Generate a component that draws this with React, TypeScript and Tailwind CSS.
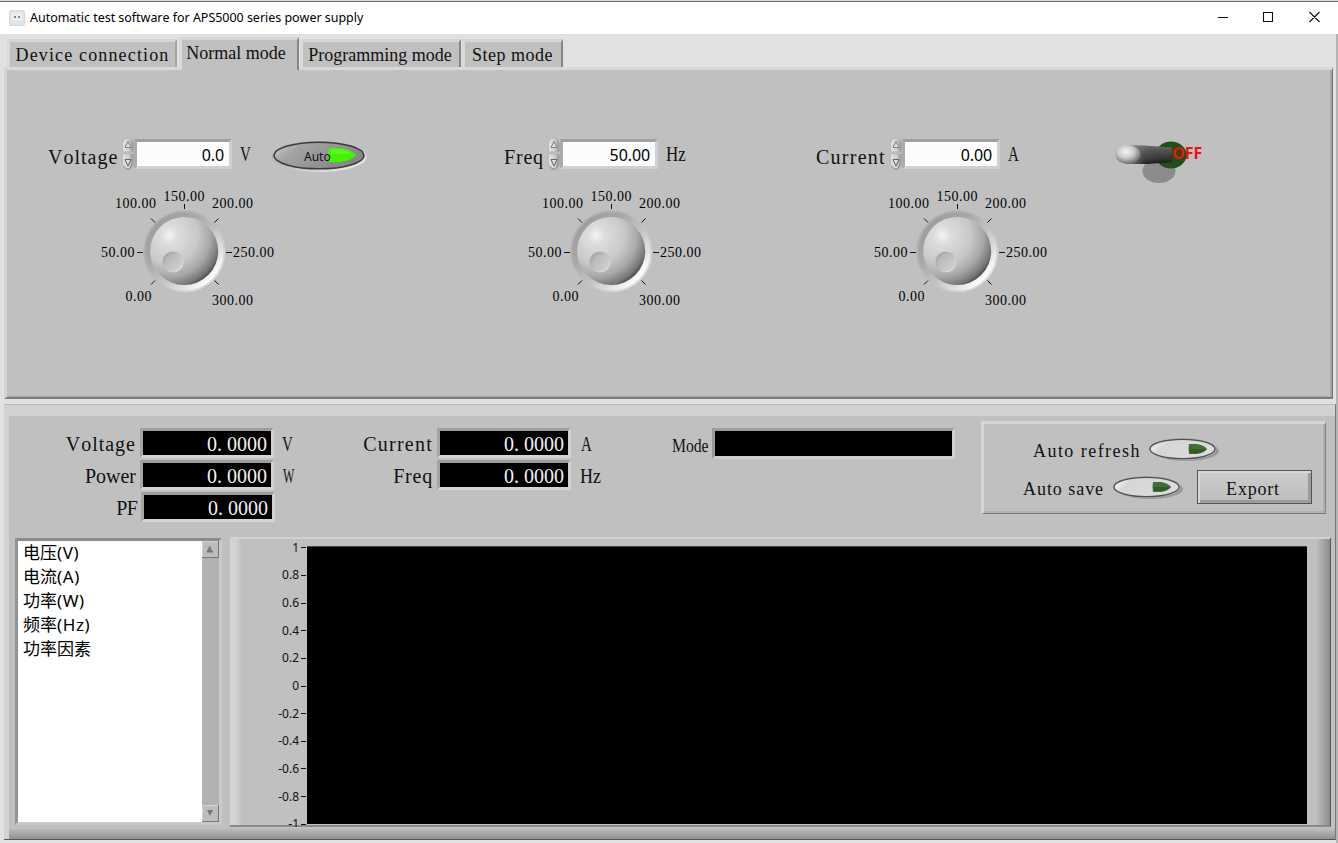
import React from "react";

const SERIF = "font-['Liberation_Serif','Noto_Sans_CJK_SC',serif] [font-kerning:none]";
const SANS = "font-['Noto_Sans','Noto_Sans_CJK_SC',sans-serif]";

function Defs() {
  return (
    <svg className="absolute h-0 w-0" aria-hidden="true">
      <defs>
        <linearGradient id="ring" x1="0.12" y1="0.12" x2="0.88" y2="0.88">
          <stop offset="0" stopColor="#9c9c9c" />
          <stop offset="0.3" stopColor="#a8a8a8" />
          <stop offset="0.55" stopColor="#c0c0c0" />
          <stop offset="0.78" stopColor="#e0e0e0" />
          <stop offset="0.95" stopColor="#ffffff" />
        </linearGradient>
        <radialGradient id="knob" cx="0.28" cy="0.27" r="0.84">
          <stop offset="0" stopColor="#f4f4f4" />
          <stop offset="0.16" stopColor="#dcdcdc" />
          <stop offset="0.5" stopColor="#c8c8c8" />
          <stop offset="0.72" stopColor="#a8a8a8" />
          <stop offset="0.9" stopColor="#767676" />
          <stop offset="1" stopColor="#383838" />
        </radialGradient>
        <linearGradient id="dimple" x1="0.1" y1="0.1" x2="0.9" y2="0.9">
          <stop offset="0" stopColor="#a2a2a2" />
          <stop offset="0.5" stopColor="#c2c2c2" />
          <stop offset="1" stopColor="#dedede" />
        </linearGradient>
        <linearGradient id="dimpleInner" x1="0.1" y1="0.1" x2="0.9" y2="0.9">
          <stop offset="0" stopColor="#b4b4b4" />
          <stop offset="1" stopColor="#d0d0d0" />
        </linearGradient>
        <linearGradient id="autoBtn" x1="0" y1="0" x2="1" y2="0.4">
          <stop offset="0" stopColor="#d0d0d0" />
          <stop offset="0.3" stopColor="#a4a4a4" />
          <stop offset="1" stopColor="#868686" />
        </linearGradient>
        <linearGradient id="autoRim" x1="0" y1="0" x2="1" y2="1">
          <stop offset="0" stopColor="#a0a0a0" />
          <stop offset="0.5" stopColor="#c0c0c0" />
          <stop offset="1" stopColor="#f4f4f4" />
        </linearGradient>
        <linearGradient id="pill" x1="0" y1="0" x2="1" y2="0.3">
          <stop offset="0" stopColor="#ffffff" />
          <stop offset="0.3" stopColor="#d6d6d6" />
          <stop offset="1" stopColor="#dcdcdc" />
        </linearGradient>
        <linearGradient id="shaft" x1="0" y1="0" x2="0" y2="1">
          <stop offset="0" stopColor="#6c6c6c" />
          <stop offset="0.3" stopColor="#505050" />
          <stop offset="0.75" stopColor="#303030" />
          <stop offset="1" stopColor="#101010" />
        </linearGradient>
        <linearGradient id="shaftFade" x1="0" y1="0" x2="1" y2="0">
          <stop offset="0" stopColor="#8a8a8a" />
          <stop offset="0.4" stopColor="#8a8a8a" stopOpacity="0.15" />
          <stop offset="1" stopColor="#202020" stopOpacity="0" />
        </linearGradient>
        <radialGradient id="ball" cx="0.42" cy="0.35" r="0.65">
          <stop offset="0" stopColor="#f4f4f4" />
          <stop offset="0.5" stopColor="#cccccc" />
          <stop offset="1" stopColor="#6c6c6c" />
        </radialGradient>
        <linearGradient id="spin" x1="0" y1="0" x2="1" y2="0">
          <stop offset="0" stopColor="#e4e4e4" />
          <stop offset="0.6" stopColor="#cdcdcd" />
          <stop offset="1" stopColor="#8c8c8c" />
        </linearGradient>
      </defs>
    </svg>
  );
}

function Knob({ className }: { className: string }) {
  const labels: [string, number, number][] = [
    ["0.00", 31.5, 116],
    ["50.00", 7, 72],
    ["100.00", 21, 23],
    ["150.00", 69.5, 16],
    ["200.00", 118, 23],
    ["250.00", 139, 72],
    ["300.00", 118, 120],
  ];
  return (
    <svg width="190" height="125" viewBox="0 0 190 125" className={`block shrink-0 ${className}`}>
      <circle cx="90.3" cy="66.3" r="41" fill="url(#ring)" />
      <circle cx="90.3" cy="66.3" r="40.2" fill="none" stroke="#c0c0c0" strokeWidth="2.4" strokeOpacity="0.5" />
      <circle cx="90.2" cy="66" r="34" fill="url(#knob)" />
      <circle cx="79" cy="77" r="10.5" fill="url(#dimple)" />
      <circle cx="79.4" cy="77.4" r="8.5" fill="url(#dimpleInner)" />
      <path
        d="M90.5 19v5M43 67.5h6M132 67.5h6M57 33.5l4 4M124.5 33.5l-4 4M57 99.5l4-4M124.5 99.5l-4-4"
        stroke="#111"
        strokeWidth="1"
        fill="none"
      />
      {labels.map(([t, x, y]) => (
        <text key={t} x={x} y={y} fill="#000" className={`${SERIF} text-[14px] tracking-[0.5px]`}>
          {t}
        </text>
      ))}
    </svg>
  );
}

function Spinner() {
  return (
    <svg width="12" height="34" viewBox="0 0 12 34" className="block shrink-0">
      <path d="M0.5 15V7Q1 1 6 1Q10.500 1 11.500 7V15Z" fill="url(#spin)" stroke="#b0b0b0" strokeWidth="0.7" />
      <path d="M0.500 17V26Q1 32 6 32Q10.500 32 11.500 26V17Z" fill="url(#spin)" stroke="#b0b0b0" strokeWidth="0.7" />
      <path d="M3 10.500L6 4.500L9 10.500Z" fill="#dedede" stroke="#777" strokeWidth="0.9" />
      <path d="M3 22.500L6 29L9 22.500Z" fill="#dedede" stroke="#666" strokeWidth="1" />
      <path d="M1.500 29Q4 33 7 32.300L10.500 28" fill="none" stroke="#808080" strokeWidth="0.9" />
    </svg>
  );
}

function NumberInput({ value }: { value: string }) {
  return (
    <div
      className={`flex h-[30px] w-[98px] shrink-0 items-center justify-end border-[3px] border-t-[#a0a0a0] border-r-[#cfcfcf] border-b-[#d0d0d0] border-l-[#ababab] bg-[#fcfcfc] pt-[2px] pr-[5px] text-[16px] leading-none tracking-[-0.1px] text-black ${SANS}`}
    >
      {value}
    </div>
  );
}

function Control({
  label,
  labelClass,
  value,
  unit,
  unitClass,
  knobClass,
  children,
}: {
  label: string;
  labelClass: string;
  value: string;
  unit: string;
  unitClass: string;
  knobClass: string;
  children?: React.ReactNode;
}) {
  return (
    <div className="flex flex-col">
      <div className="flex h-[48px] items-start">
        <span className={`mt-[9px] shrink-0 text-[20px] leading-[22px] whitespace-nowrap ${labelClass}`}>{label}</span>
        <Spinner />
        <div className="mt-[2px]">
          <NumberInput value={value} />
        </div>
        <span className={`mt-[6px] ml-[8px] origin-left text-[20px] leading-[22px] ${unitClass}`}>{unit}</span>
        {children}
      </div>
      <Knob className={knobClass} />
    </div>
  );
}

function Readout({
  label,
  labelClass,
  labelWidth,
  unit,
  unitClass,
  shift,
}: {
  label: string;
  labelClass: string;
  labelWidth: string;
  unit: string;
  unitClass: string;
  shift?: string;
}) {
  return (
    <div className={`flex h-[32px] items-start ${shift ?? ""}`}>
      <span className={`mt-[5px] text-right text-[20px] leading-[22px] ${labelWidth} ${labelClass}`}>{label}</span>
      <div className="ml-[4px] flex h-[30px] w-[134px] items-center justify-end border-[3px] border-t-[#9e9e9e] border-r-[#d2d2d2] border-b-[#d4d4d4] border-l-[#a4a4a4] bg-black pr-[4px] text-[20px] leading-none text-[#f2f2f2]">
        <span className="mt-[2px]">
          0<span className="tracking-[5px]">.</span>0000
        </span>
      </div>
      <span className={`mt-[5px] origin-left text-[20px] leading-[22px] ${unitClass}`}>{unit}</span>
    </div>
  );
}

function Toggle() {
  return (
    <svg width="74" height="28" viewBox="0 0 74 28" className="block shrink-0">
      <ellipse cx="38" cy="16" rx="33" ry="10" fill="#989898" />
      <ellipse cx="34.500" cy="14" rx="34" ry="11" fill="#b0b0b0" />
      <ellipse cx="34.500" cy="14" rx="32.500" ry="9.600" fill="url(#pill)" stroke="#505050" strokeWidth="1.300" />
      <path d="M41 9h8q7 1 10 5q-3 4-10 5h-8q-1-5 0-10z" fill="#3f6f35" />
      <path d="M42 14h17q-3 3-9 4h-8z" fill="#315c28" />
    </svg>
  );
}

function Tab({ text, className }: { text: string; className: string }) {
  return (
    <div
      className={`flex shrink-0 justify-center border-t-[3px] border-r-2 border-l-[3px] border-t-[#d6d6d6] border-r-[#858585] border-l-[#dadada] bg-[#c0c0c0] text-[18px] leading-[20px] whitespace-nowrap ${className}`}
    >
      {text}
    </div>
  );
}

const series: [string, string][] = [
  ["电压", "(V)"],
  ["电流", "(A)"],
  ["功率", "(W)"],
  ["频率", "(Hz)"],
  ["功率因素", ""],
];
const ticks = ["1", "0.8", "0.6", "0.4", "0.2", "0", "-0.2", "-0.4", "-0.6", "-0.8", "-1"];

export default function App() {
  return (
    <div className={`flex h-[843px] w-[1338px] flex-col overflow-hidden bg-[#e1e1e1] text-[#111] ${SERIF}`}>
      <Defs />
      <header
        className={`flex h-[34px] shrink-0 items-center border-t border-t-[#d8d8d8] bg-white shadow-[inset_0_1px_0_#6a6a6a] ${SANS}`}
      >
        <svg width="16" height="16" viewBox="0 0 16 16" className="ml-[9px]">
          <rect x="0.500" y="0.500" width="15" height="15" rx="1.500" fill="#dfe4e6" stroke="#d3d9db" />
          <rect x="2.500" y="3" width="11" height="8" fill="#eceff0" />
          <path d="M5 7h2M9 7h2" stroke="#666" strokeWidth="1.300" />
        </svg>
        <span className="mt-px ml-[5px] text-[12.5px] tracking-[-0.03px] whitespace-nowrap text-black">
          Automatic test software for APS5000 series power supply
        </span>
        <svg width="104" height="12" viewBox="0 0 104 12" className="-mt-px mr-[17px] ml-auto">
          <path d="M1 6.500h10M46.500 1.500h9v9h-9zM92.500 1l10 10M102.500 1l-10 10" fill="none" stroke="#111" strokeWidth="1.100" />
        </svg>
      </header>

      <div className="flex min-h-0 flex-1 flex-col border-r-2 border-r-[#b4b4b4] pl-[4px]">
        <nav className="z-10 -mb-[3px] flex h-[36px] shrink-0 items-end pl-[3px]">
          <Tab text="Device connection" className="mb-[3px] h-[28px] w-[170px] border-r-[#a4a4a4] pt-[3px] tracking-[1.15px]" />
          <Tab text="Normal mode" className="ml-[2px] h-[33px] w-[120px] pt-[3px] pr-[7px]" />
          <Tab text="Programming mode" className="mb-[3px] ml-px h-[28px] w-[161px] pt-[3px] pr-[2px]" />
          <Tab text="Step mode" className="mb-[3px] ml-px h-[28px] w-[101px] pt-[3px] pr-px tracking-[0.5px]" />
        </nav>

        <section className="flex h-[332px] w-[1329px] shrink-0 items-start border-t-[3px] border-r border-b-2 border-l-[3px] border-t-[#d8d8d8] border-r-[#707070] border-b-[#7c7c7c] border-l-[#d4d4d4] bg-[#c0c0c0] pt-[67px] pl-[41px] shadow-[inset_-2px_-1px_0_#a6a6a6]">
          <div className="w-[456px] shrink-0">
            <Control
              label="Voltage"
              labelClass="w-[74px] tracking-[1px]"
              value="0.0"
              unit="V"
              unitClass="w-[31px] scale-x-75"
              knobClass="ml-[46px]"
            >
              <svg width="100" height="38" viewBox="0 0 100 38" className="block shrink-0">
                <ellipse cx="48.500" cy="19.500" rx="47.500" ry="15.500" fill="url(#autoRim)" />
                <ellipse cx="48" cy="18.500" rx="45" ry="13.300" fill="url(#autoBtn)" stroke="#3c3c3c" strokeWidth="1.600" />
                <path d="M58 11h10q12 1 17 7q-5 6-17 7h-10q-2-7 0-14z" fill="#41f400" />
                <path d="M60 12h8q9 1 13 5h-21z" fill="#6dff35" fillOpacity="0.5" />
                <text x="33" y="23.500" className={`${SANS} text-[12px]`} fill="#111">
                  Auto
                </text>
              </svg>
            </Control>
          </div>
          <div className="w-[312px] shrink-0">
            <Control
              label="Freq"
              labelClass="w-[44px] tracking-[0.8px]"
              value="50.00"
              unit="Hz"
              unitClass="scale-x-[0.85]"
              knobClass="ml-[17px]"
            />
          </div>
          <div className="w-[298px] shrink-0">
            <Control
              label="Current"
              labelClass="w-[74px] tracking-[1.25px]"
              value="0.00"
              unit="A"
              unitClass="scale-x-75"
              knobClass="ml-[51px]"
            />
          </div>
          <svg width="92" height="50" viewBox="0 0 92 50" className="block">
            <ellipse cx="45" cy="34" rx="16.500" ry="12" fill="#8c8c8c" />
            <ellipse cx="57" cy="18" rx="15.500" ry="13.500" fill="#1f4f18" />
            <path d="M12 8.500H30L58 10.500V25L34 27H12Z" fill="url(#shaft)" />
            <path d="M12 8.500H30L58 10.500V25L34 27H12Z" fill="url(#shaftFade)" />
            <ellipse cx="14" cy="17.500" rx="12.500" ry="9.500" fill="url(#ball)" />
            <text x="58" y="21.500" fill="#f01010" className={`${SANS} text-[16px] font-bold`}>
              OFF
            </text>
          </svg>
        </section>

        <section className="mt-[5px] flex h-[436px] w-[1332px] shrink-0 flex-col border-t border-r border-b border-t-[#b8b8b8] border-r-[#777] border-b-[#555] bg-[#c0c0c0]">
          <div className="h-[11px] shrink-0 bg-[#d2d2d2]" />
          <div className="flex min-h-0 flex-1 flex-col border-l-[5px] border-l-[#d2d2d2]">
            <div className="flex h-[121px] shrink-0 items-start">
              <div className="mt-[12px] w-[297px] shrink-0">
                <Readout label="Voltage" labelClass="tracking-[1px]" labelWidth="w-[127px]" unit="V" unitClass="ml-[8px] scale-x-75" />
                <Readout label="Power" labelClass="" labelWidth="w-[127px]" unit="W" unitClass="ml-[9px] scale-x-[0.6]" />
                <Readout label="PF" labelClass="tracking-[-0.8px]" labelWidth="w-[127px]" unit="" unitClass="" shift="pl-px" />
              </div>
              <div className="mt-[12px] w-[310px] shrink-0">
                <Readout label="Current" labelClass="tracking-[1.25px]" labelWidth="w-[127px]" unit="A" unitClass="ml-[10px] scale-x-75" />
                <Readout label="Freq" labelClass="tracking-[0.8px]" labelWidth="w-[127px]" unit="Hz" unitClass="ml-[9px] scale-x-90" />
              </div>
              <div className="mt-[12px] flex w-[356px] shrink-0 items-start pl-[56px]">
                <span className="mt-[8px] w-[40px] origin-left scale-x-[0.87] text-[18px] leading-[20px]">Mode</span>
                <div className="h-[31px] w-[243px] border-[3px] border-t-[#9e9e9e] border-r-[#d2d2d2] border-b-[#d0d0d0] border-l-[#9c9c9c] bg-black" />
              </div>
              <div className="mt-[5px] ml-[9px] flex h-[93px] w-[345px] shrink-0 flex-col border-t-[3px] border-r border-b border-l-[3px] border-t-[#d6d6d6] border-r-[#808080] border-b-[#787878] border-l-[#d6d6d6] text-[18px] leading-[20px] shadow-[inset_-2px_-2px_0_#b0b0b0]">
                <div className="mt-[11px] flex h-[34px] items-start pl-[49px]">
                  <span className="mt-[6px] w-[115px] tracking-[1.45px] whitespace-nowrap">Auto refresh</span>
                  <Toggle />
                </div>
                <div className="flex h-[38px] items-start pl-[39px]">
                  <span className="mt-[10px] w-[89px] tracking-[0.95px] whitespace-nowrap">Auto save</span>
                  <div className="mt-[4px]">
                    <Toggle />
                  </div>
                  <button className="mt-[1px] ml-[11px] h-[34px] w-[115px] border border-[#555] bg-linear-to-b from-[#cdcdcd] to-[#bdbdbd] pt-[3px] pr-[3px] tracking-[0.8px] shadow-[inset_2px_2px_0_#d8d8d8,inset_-3px_-3px_0_#9c9c9c]">
                    Export
                  </button>
                </div>
              </div>
            </div>

            <div className="flex h-[290px] shrink-0 pl-[6px]">
              <div className="mt-px flex h-[287px] w-[207px] shrink-0 border-[3px] border-t-[#8c8c8c] border-r-[#cacaca] border-b-[#c8c8c8] border-l-[#949494] bg-white">
                <ul className={`flex-1 pl-[5px] text-[17px] leading-[24px] text-black ${SANS}`}>
                  {series.map(([name, unit]) => (
                    <li key={name + unit} className="h-[24px]">
                      {name}
                      <span className="tracking-[0.6px]">{unit}</span>
                    </li>
                  ))}
                </ul>
                <div className="flex w-[17px] flex-col justify-between bg-[#b2b2b2]">
                  <svg width="17" height="17" viewBox="0 0 17 17">
                    <rect x="0.500" y="0.500" width="16" height="16" fill="#bdbdbd" stroke="#777" />
                    <path d="M0.500 16V0.500H16" stroke="#d4d4d4" fill="none" />
                    <path d="M8 5L11 11H5Z" fill="#808080" />
                    <path d="M8 5L5 11H11" stroke="#606060" strokeWidth="0.800" fill="none" />
                  </svg>
                  <svg width="17" height="17" viewBox="0 0 17 17">
                    <rect x="0.500" y="0.500" width="16" height="16" fill="#bdbdbd" stroke="#777" />
                    <path d="M0.500 16V0.500H16" stroke="#d4d4d4" fill="none" />
                    <path d="M5 5H11L8 11Z" fill="#777" />
                  </svg>
                </div>
              </div>

              <div className="ml-[8px] flex h-[290px] w-[1101px] shrink-0 border-t-2 border-r border-b-2 border-t-[#d2d2d2] border-r-[#555] border-b-[#8a8a8a] bg-[#c0c0c0]">
                <div className="w-[12px] shrink-0 bg-linear-to-r from-[#d4d4d4] via-[#d2d2d2] to-[#c0c0c0]" />
                <div
                  className={`mt-[-5px] flex h-[304px] w-[65px] shrink-0 flex-col items-end pr-px text-[12px] leading-none text-[#111] ${SANS}`}
                >
                  {ticks.map((t) => (
                    <div key={t} className="flex min-h-0 flex-1 items-center">
                      <span>{t}</span>
                      <span className="ml-[2px] h-px w-[5px] bg-[#111]" />
                    </div>
                  ))}
                </div>
                <div className="mt-[7px] h-[278px] w-[1000px] shrink-0 border-t border-t-[#444] bg-black" />
                <div className="ml-auto w-[14px] bg-linear-to-r from-[#c0c0c0] to-[#8c8c8c]" />
              </div>
            </div>

            <div className="flex-1 bg-linear-to-b from-[#c4c4c4] to-[#909090]" />
          </div>
        </section>
      </div>
    </div>
  );
}
